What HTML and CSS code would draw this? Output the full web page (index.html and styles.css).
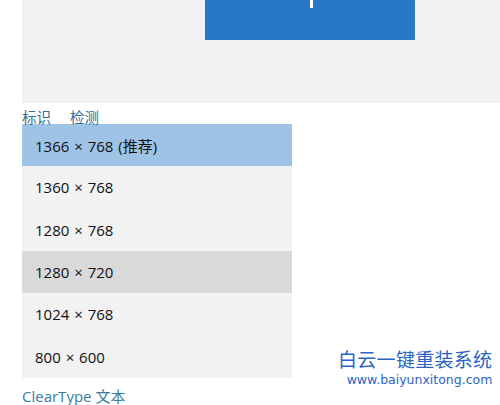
FILE: index.html
```html
<!DOCTYPE html>
<html>
<head>
<meta charset="utf-8">
<link rel="stylesheet" href="styles.css">
</head>
<body>
<div class="page">
  <div class="preview">
    <div class="monitor"><div class="tick"></div></div>
  </div>
  <div class="links"><span class="link">标识</span><span class="link">检测</span></div>
  <div class="list">
    <div class="row selected">1366 × 768 (推荐)</div>
    <div class="row">1360 × 768</div>
    <div class="row">1280 × 768</div>
    <div class="row hover">1280 × 720</div>
    <div class="row">1024 × 768</div>
    <div class="row">800 × 600</div>
  </div>
  <div class="cleartype">ClearType 文本</div>
</div>
<div class="watermark">
  <div class="wm-title">白云一键重装系统</div>
  <div class="wm-url">www.baiyunxitong.com</div>
</div>
</body>
</html>
```
FILE: styles.css
```css
html, body {
  margin: 0;
  padding: 0;
  background: #ffffff;
  overflow: hidden;
}
body {
  width: 500px;
  height: 405px;
  font-family: "Open Sans", "Noto Sans CJK SC", sans-serif;
  position: relative;
}
.page {
  padding-left: 22px;
}
.preview {
  height: 103px;
  background: #f2f2f2;
  display: flex;
  padding-left: 183px;
}
.monitor {
  width: 210px;
  height: 40px;
  background: #2878c8;
  display: flex;
  justify-content: center;
}
.tick {
  width: 3px;
  height: 8px;
  background: #ffffff;
  margin-left: 2px;
}
.links {
  height: 21px;
  display: flex;
  gap: 19px;
  font-size: 14.5px;
  line-height: 15px;
  padding-top: 6px;
  box-sizing: border-box;
  color: #2f6f96;
  font-family: "Noto Sans CJK SC", sans-serif;
}
.list {
  width: 270px;
  background: #f2f2f2;
}
.row {
  height: 42.33px;
  display: flex;
  align-items: center;
  padding-left: 13px;
  font-size: 15px;
  color: #111111;
  font-family: "Open Sans", "Noto Sans CJK SC", sans-serif;
  word-spacing: 1px;
}
.row.selected { background: #9fc3e5; }
.row.hover { background: #d9d9d9; }
.cleartype {
  margin-top: 9px;
  font-size: 15px;
  line-height: 18px;
  color: #3a7a9e;
  font-family: "Open Sans", "Noto Sans CJK SC", sans-serif;
}
.watermark {
  position: absolute;
  left: 338px;
  top: 348px;
  display: flex;
  flex-direction: column;
  align-items: flex-end;
  gap: 3px;
  color: #2b63c6;
}
.wm-title {
  font-family: "Noto Sans CJK SC", sans-serif;
  font-size: 19px;
  line-height: 22px;
  letter-spacing: 0.3px;
}
.wm-url {
  font-family: "DejaVu Sans", sans-serif;
  font-size: 12.5px;
  line-height: 13px;
}
```
